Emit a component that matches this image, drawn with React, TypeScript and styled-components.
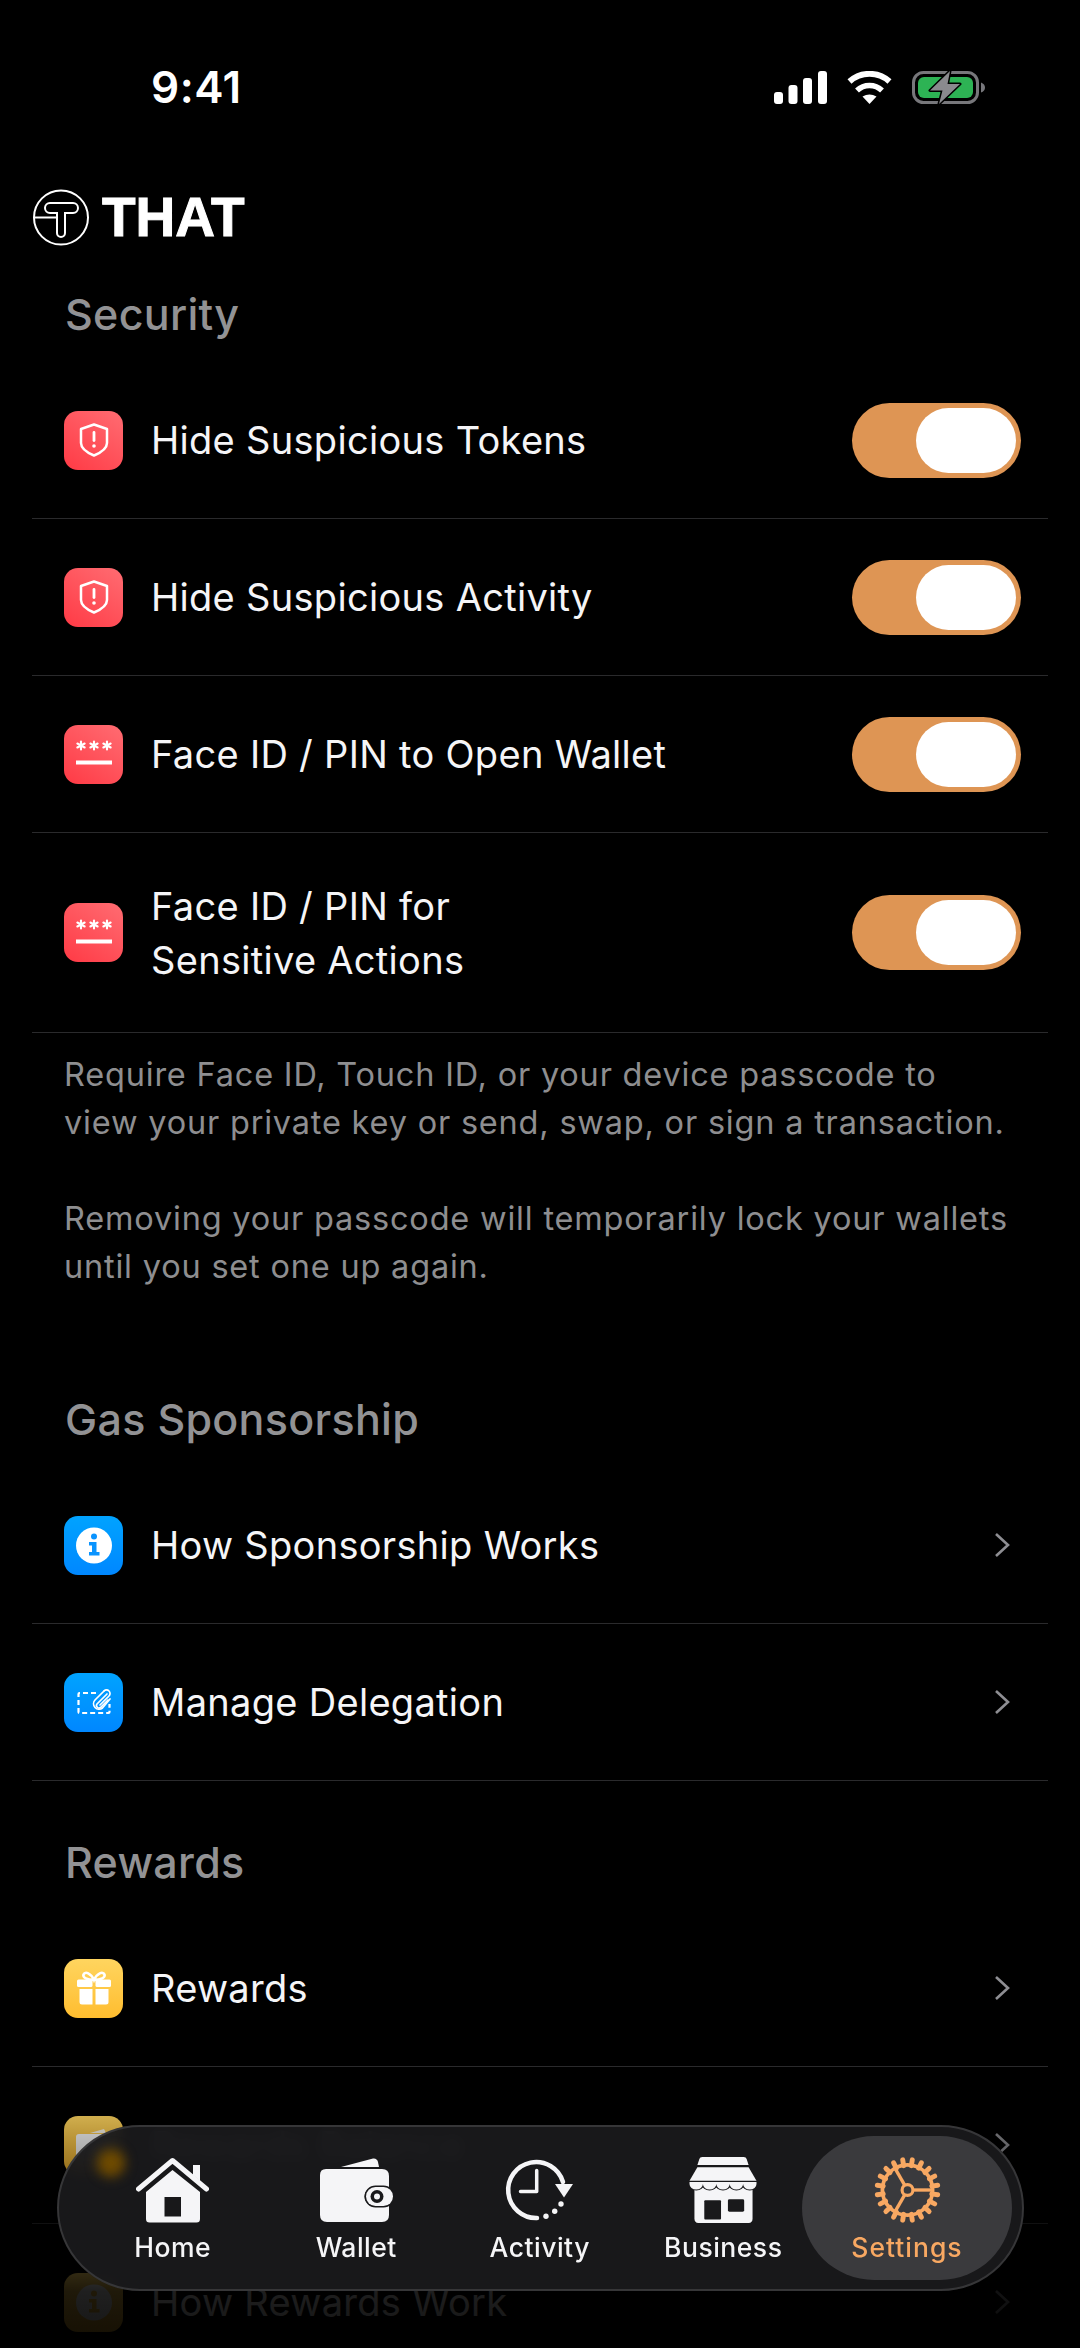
import React from "react";
import styled, { createGlobalStyle } from "styled-components";

const GlobalStyle = createGlobalStyle`
    html, body {
        margin: 0;
        background: #000;
    }
    * {
        box-sizing: border-box;
    }
`;

const Screen = styled.div`
    position: relative;
    width: 1080px;
    height: 2348px;
    overflow: hidden;
    background: #000;
    color: #f5f5f7;
    font-family: Inter, "Liberation Sans", sans-serif;
`;

const StatusBar = styled.div`
    display: flex;
    align-items: center;
    justify-content: space-between;
    height: 174px;
    padding: 0 95px 0 151px;
`;

const Time = styled.span`
    font-size: 44px;
    font-weight: 600;
    letter-spacing: 0.5px;
    color: #fff;
`;

const StatusIcons = styled.div`
    display: flex;
    align-items: center;
    gap: 20px;
`;

const Brand = styled.div`
    display: flex;
    align-items: center;
    gap: 13px;
    height: 110px;
    padding: 0 0 23px 33px;
`;

const BrandName = styled.span`
    font-family: "Liberation Sans", sans-serif;
    font-size: 55px;
    font-weight: 700;
    line-height: 1;
    letter-spacing: 0;
    color: #fff;
    -webkit-text-stroke: 1px #fff;
`;

const SectionTitle = styled.h2<{ $gap?: number }>`
    margin: ${(p) => p.$gap ?? 0}px 0 18px 65px;
    height: 60px;
    font-size: 43px;
    font-weight: 500;
    line-height: 60px;
    letter-spacing: 0.3px;
    color: #929294;
`;

const List = styled.div`
    margin: 0 32px;
`;

const Row = styled.div<{ $tall?: boolean }>`
    display: flex;
    align-items: center;
    height: ${(p) => (p.$tall ? 200 : 157)}px;
    padding: 0 27px 0 32px;
    border-bottom: 1px solid #2a2a2c;
`;

const Tile = styled.div<{ $tone: "red" | "blue" | "yellow" }>`
    display: flex;
    flex: none;
    align-items: center;
    justify-content: center;
    width: 59px;
    height: 59px;
    border-radius: 14px;
    background: ${(p) =>
        p.$tone === "red"
            ? "linear-gradient(35deg, #ff3a45, #ff6c72)"
            : p.$tone === "blue"
              ? "linear-gradient(180deg, #00a3ff, #0087ff)"
              : "linear-gradient(180deg, #ffd55f, #ffbd2f)"};
`;

const RowLabel = styled.div`
    flex: 1;
    margin-left: 28px;
    font-size: 38px;
    font-weight: 400;
    line-height: 54px;
    letter-spacing: 0.3px;
    color: #f5f5f7;
`;

const Track = styled.div`
    display: flex;
    flex: none;
    justify-content: flex-end;
    width: 169px;
    height: 75px;
    padding: 5px;
    border-radius: 38px;
    background: #de9554;
`;

const Thumb = styled.div`
    width: 100px;
    height: 65px;
    border-radius: 33px;
    background: #fff;
`;

const Chevron = styled.svg`
    flex: none;
    margin-right: 11px;
`;

const Note = styled.div`
    padding: 18px 64px 0;
    font-size: 32.5px;
    line-height: 48px;
    letter-spacing: 0.8px;
    color: #8e8e90;

    p {
        margin: 0 0 48px;
    }
    p:last-child {
        margin-bottom: 0;
    }
`;

const Fade = styled.div`
    position: absolute;
    left: 0;
    right: 0;
    bottom: 0;
    height: 258px;
    pointer-events: none;
    background: linear-gradient(
        180deg,
        rgba(0, 0, 0, 0.08) 0%,
        rgba(0, 0, 0, 0.88) 78%,
        rgba(0, 0, 0, 0.92) 100%
    );
`;

const TabBar = styled.div`
    position: absolute;
    left: 57px;
    top: 2125px;
    display: flex;
    align-items: center;
    width: 967px;
    height: 166px;
    padding-left: 22px;
    border: 2px solid #363638;
    border-radius: 83px;
    background: rgba(25, 25, 27, 0.96);
    backdrop-filter: blur(7px);
`;

const Glow = styled.div`
    position: absolute;
    left: 38px;
    top: 22px;
    width: 28px;
    height: 28px;
    border-radius: 50%;
    background: #6f4b00;
    filter: blur(6px);
`;

const Tab = styled.div<{ $active?: boolean }>`
    position: relative;
    display: flex;
    flex: none;
    flex-direction: column;
    align-items: center;
    width: ${(p) => (p.$active ? 210 : 183.5)}px;
    height: 144px;
    margin: ${(p) => (p.$active ? "0 0 0 -13px" : "0")};
    padding-top: 21px;
    border-radius: 72px;
    background: ${(p) => (p.$active ? "#3a3a3d" : "transparent")};
    color: ${(p) => (p.$active ? "#f8a862" : "#f5f5f7")};
    letter-spacing: ${(p) => (p.$active ? 1 : 0.5)}px;
`;

const TabIcon = styled.svg`
    display: block;
    height: 66px;
`;

const TabLabel = styled.span`
    margin-top: 9px;
    font-size: 26.5px;
    font-weight: 500;
    line-height: 30px;
`;

const SignalIcon = () => (
    <svg width="53" height="33" viewBox="0 0 53 33" fill="#fff">
        <rect x="0" y="21" width="9" height="12" rx="3" />
        <rect x="14.5" y="14" width="9" height="19" rx="3" />
        <rect x="29" y="7" width="9" height="26" rx="3" />
        <rect x="44" y="0" width="9" height="33" rx="3" />
    </svg>
);

const WifiIcon = () => (
    <svg width="45" height="33" viewBox="0 0 45 33" fill="none">
        <path d="M2.5 10.5A30 30 0 0 1 42.5 10.5" stroke="#fff" strokeWidth="6" />
        <path d="M10 19.5A18 18 0 0 1 35 19.5" stroke="#fff" strokeWidth="5.5" />
        <path d="M15.5 25.5Q22.5 21.5 29.5 25.5L22.5 33Z" fill="#fff" />
    </svg>
);

const BatteryIcon = () => (
    <svg width="73" height="35" viewBox="0 0 73 35" fill="none">
        <rect x="1.5" y="2.5" width="64" height="30" rx="10" stroke="#77777b" strokeWidth="3" />
        <rect x="6" y="7" width="55" height="21" rx="6" fill="#2db354" />
        <path d="M69 12.5q4 1.500 4 5t-4 5z" fill="#77777b" />
        <path
            d="M38 1L18 20.500H30.500L27 34L48 14H35.500Z"
            fill="#8a8a8e"
            stroke="#000"
            strokeWidth="3"
            strokeLinejoin="round"
            paintOrder="stroke"
        />
    </svg>
);

const LogoMark = () => (
    <svg width="56" height="57" viewBox="0 0 56 57" fill="none" stroke="#fff" strokeWidth="2">
        <circle cx="28" cy="28.500" r="27" />
        <path d="M1 28.500H24V44a4 4 0 0 0 8 0V24H40a5 5 0 0 0 0-10H17a5 5 0 0 0 0 10H24V28.500" />
    </svg>
);

const ShieldIcon = () => (
    <svg width="30" height="34" viewBox="0 0 30 34" fill="none">
        <path
            d="M15 1.500L28 6V20C28 25.500 21 30 15 32.500C9 30 2 25.500 2 20V6Z"
            stroke="#fff"
            strokeWidth="2.500"
            strokeLinejoin="round"
        />
        <rect x="13.600" y="8" width="2.800" height="11" rx="1.400" fill="#fff" />
        <circle cx="15" cy="23" r="1.800" fill="#fff" />
    </svg>
);

const PasscodeIcon = () => (
    <svg width="36" height="28" viewBox="0 0 36 28" fill="none" stroke="#fff">
        {[5, 18, 31].map((x) => (
            <g key={x} strokeWidth="2.100" strokeLinecap="round">
                <path d={`M${x} 1.500V9.500`} />
                <path d={`M${x - 3.6} 3.500L${x + 3.6} 7.500`} />
                <path d={`M${x - 3.6} 7.500L${x + 3.6} 3.500`} />
            </g>
        ))}
        <path d="M0 22.500H36" strokeWidth="4" />
    </svg>
);

const InfoIcon = ({ color }: { color: string }) => (
    <svg width="36" height="37" viewBox="0 0 36 37">
        <circle cx="18" cy="18.500" r="18" fill="#fff" />
        <circle cx="18" cy="9.500" r="3" fill={color} />
        <path d="M13 15H20.500V25H23.500V28.500H13V25H16V18.500H13Z" fill={color} />
    </svg>
);

const DelegationIcon = () => (
    <svg width="34" height="26" viewBox="0 0 34 26" fill="none" stroke="#fff">
        <path
            d="M19 4H2.500a1 1 0 0 0-1 1V23a1 1 0 0 0 1 1H31.500a1 1 0 0 0 1-1V15"
            strokeWidth="2.200"
            strokeDasharray="5 3"
        />
        <path d="M30 5L20 15a2.500 2.500 0 0 0 3.500 3.500L31 11" strokeWidth="1.700" strokeLinecap="round" />
        <path d="M27 2L18 11a5.500 5.500 0 0 0 7.500 8L33 10" strokeWidth="1.700" strokeLinecap="round" />
        <path d="M27 2a3.500 3.500 0 0 1 5 5L23 16" strokeWidth="1.700" strokeLinecap="round" />
    </svg>
);

const GiftIcon = () => (
    <svg width="34" height="34" viewBox="0 0 34 34">
        <path
            d="M17 9C14 2 8 0 6.500 3.500C5.500 6.500 10 9 17 9C24 9 28.500 6.500 27.500 3.500C26 0 20 2 17 9Z"
            fill="none"
            stroke="#fff"
            strokeWidth="2.600"
        />
        <rect x="0" y="8.500" width="15.500" height="7.500" rx="1.500" fill="#fff" />
        <rect x="18.500" y="8.500" width="15.500" height="7.500" rx="1.500" fill="#fff" />
        <path d="M2.500 18H15.500V33.500H5a2.500 2.500 0 0 1-2.500-2.500Z" fill="#fff" />
        <path d="M18.500 18H31.500V31a2.500 2.500 0 0 1-2.500 2.500H18.500Z" fill="#fff" />
    </svg>
);

const CoinWalletIcon = () => (
    <svg width="36" height="34" viewBox="0 0 36 34" fill="#fff">
        <path d="M14 5L28 1L30 5Z" opacity="0.9" />
        <rect x="0" y="6" width="36" height="26" rx="3" />
    </svg>
);

const ChevronRight = () => (
    <Chevron width="16" height="26" viewBox="0 0 16 26" fill="none">
        <path d="M2 2L14 13L2 24" stroke="#8e8e93" strokeWidth="2.600" />
    </Chevron>
);

const Toggle = () => (
    <Track>
        <Thumb />
    </Track>
);

const HomeIcon = () => (
    <TabIcon viewBox="0 0 73 66" width="73" fill="currentColor">
        <path d="M2.500 32L36.500 3.500L70.500 32" fill="none" stroke="currentColor" strokeWidth="5" strokeLinecap="round" strokeLinejoin="round" />
        <path d="M57 8H64V24L57 18Z" />
        <path
            fillRule="evenodd"
            d="M36.500 13L64 35V62a3.500 3.500 0 0 1-3.500 3.500H13.500A3.500 3.500 0 0 1 10 62V35ZM28.500 40V59.500H45V40Z"
        />
    </TabIcon>
);

const WalletIcon = () => (
    <TabIcon viewBox="0 0 73 66" width="73" fill="currentColor">
        <path d="M21 10L53 1.500Q57 1 58 5L59 10Z" />
        <path d="M6 12H62Q69 12 69 19V30H54a9.500 9.500 0 0 0 0 19H69V58Q69 65 62 65H7Q0 65 0 58V18Q0 12 6 12Z" />
        <rect x="46" y="30" width="27" height="19" rx="9.500" stroke="#19191b" strokeWidth="3" paintOrder="stroke" />
        <circle cx="57" cy="39.500" r="6.500" fill="#19191b" />
        <circle cx="57" cy="39.500" r="3" />
    </TabIcon>
);

const ActivityIcon = () => (
    <TabIcon viewBox="28 17 74 66" width="74" fill="none">
        <path d="M62 78A28 28 0 1 1 88 42" stroke="currentColor" strokeWidth="4.500" strokeLinecap="round" />
        <path d="M61.700 30.500V51.500H45.500" stroke="currentColor" strokeWidth="3.500" strokeLinecap="round" strokeLinejoin="round" />
        <path d="M80 44H98L89 57.500Z" fill="currentColor" />
        <circle cx="71" cy="76.300" r="2.700" fill="currentColor" />
        <circle cx="79.700" cy="71.300" r="2.700" fill="currentColor" />
        <circle cx="86" cy="64" r="2.700" fill="currentColor" />
    </TabIcon>
);

const BusinessIcon = () => (
    <TabIcon viewBox="0 0 68 67" width="68" fill="currentColor">
        <path d="M8 8L10 2Q10.500 0 13 0H55Q57.500 0 58 2L60 8Z" />
        <path d="M8 10.500H60L68 24H0Z" />
        <path d="M5 28H64V62.500Q64 67 60 67H9Q5 67 5 62.500Z" />
        <path
            d="M0 25.500H68V27.500A6.800 5.500 0 0 1 54.400 27.500A6.800 5.500 0 0 1 40.800 27.500A6.800 5.500 0 0 1 27.200 27.500A6.800 5.500 0 0 1 13.600 27.500A6.800 5.500 0 0 1 0 27.500Z"
            stroke="#19191b"
            strokeWidth="2.200"
            paintOrder="stroke"
        />
        <rect x="15" y="44" width="17" height="19.500" rx="1" fill="#19191b" />
        <rect x="39" y="43" width="16.500" height="12.500" rx="1.500" fill="#19191b" />
    </TabIcon>
);

const gearTeeth = Array.from({ length: 20 }, (_, i) => i * 18 + 9);

const GearIcon = () => (
    <TabIcon viewBox="-33.500 -33.500 67 67" width="67" fill="none" stroke="currentColor">
        {gearTeeth.map((a) => (
            <path key={a} d="M25 0H31" strokeWidth="5" strokeLinecap="round" transform={`rotate(${a})`} />
        ))}
        <circle r="25.500" strokeWidth="3.800" />
        <circle r="5.500" strokeWidth="3.200" />
        {[0, 120, 240].map((a) => (
            <path key={a} d="M6 0H25" strokeWidth="3.400" transform={`rotate(${a})`} />
        ))}
    </TabIcon>
);

export default function App() {
    return (
        <Screen>
            <GlobalStyle />
            <StatusBar>
                <Time>9:41</Time>
                <StatusIcons>
                    <SignalIcon />
                    <WifiIcon />
                    <BatteryIcon />
                </StatusIcons>
            </StatusBar>
            <Brand>
                <LogoMark />
                <BrandName>THAT</BrandName>
            </Brand>

            <SectionTitle>Security</SectionTitle>
            <List>
                <Row>
                    <Tile $tone="red"><ShieldIcon /></Tile>
                    <RowLabel>Hide Suspicious Tokens</RowLabel>
                    <Toggle />
                </Row>
                <Row>
                    <Tile $tone="red"><ShieldIcon /></Tile>
                    <RowLabel>Hide Suspicious Activity</RowLabel>
                    <Toggle />
                </Row>
                <Row>
                    <Tile $tone="red"><PasscodeIcon /></Tile>
                    <RowLabel>Face ID / PIN to Open Wallet</RowLabel>
                    <Toggle />
                </Row>
                <Row $tall>
                    <Tile $tone="red"><PasscodeIcon /></Tile>
                    <RowLabel>
                        Face ID / PIN for
                        <br />
                        Sensitive Actions
                    </RowLabel>
                    <Toggle />
                </Row>
            </List>
            <Note>
                <p>
                    Require Face ID, Touch ID, or your device passcode to
                    <br />
                    view your private key or send, swap, or sign a transaction.
                </p>
                <p>
                    Removing your passcode will temporarily lock your wallets
                    <br />
                    until you set one up again.
                </p>
            </Note>

            <SectionTitle $gap={98}>Gas Sponsorship</SectionTitle>
            <List>
                <Row>
                    <Tile $tone="blue"><InfoIcon color="#0a94ff" /></Tile>
                    <RowLabel>How Sponsorship Works</RowLabel>
                    <ChevronRight />
                </Row>
                <Row>
                    <Tile $tone="blue"><DelegationIcon /></Tile>
                    <RowLabel>Manage Delegation</RowLabel>
                    <ChevronRight />
                </Row>
            </List>

            <SectionTitle $gap={51}>Rewards</SectionTitle>
            <List>
                <Row>
                    <Tile $tone="yellow"><GiftIcon /></Tile>
                    <RowLabel>Rewards</RowLabel>
                    <ChevronRight />
                </Row>
                <Row>
                    <Tile $tone="yellow"><CoinWalletIcon /></Tile>
                    <RowLabel>Rewards Balance</RowLabel>
                    <ChevronRight />
                </Row>
                <Row>
                    <Tile $tone="yellow"><InfoIcon color="#ffc83f" /></Tile>
                    <RowLabel>How Rewards Work</RowLabel>
                    <ChevronRight />
                </Row>
            </List>

            <Fade />
            <TabBar>
                <Glow />
                <Tab><HomeIcon /><TabLabel>Home</TabLabel></Tab>
                <Tab><WalletIcon /><TabLabel>Wallet</TabLabel></Tab>
                <Tab><ActivityIcon /><TabLabel>Activity</TabLabel></Tab>
                <Tab><BusinessIcon /><TabLabel>Business</TabLabel></Tab>
                <Tab $active><GearIcon /><TabLabel>Settings</TabLabel></Tab>
            </TabBar>
        </Screen>
    );
}
